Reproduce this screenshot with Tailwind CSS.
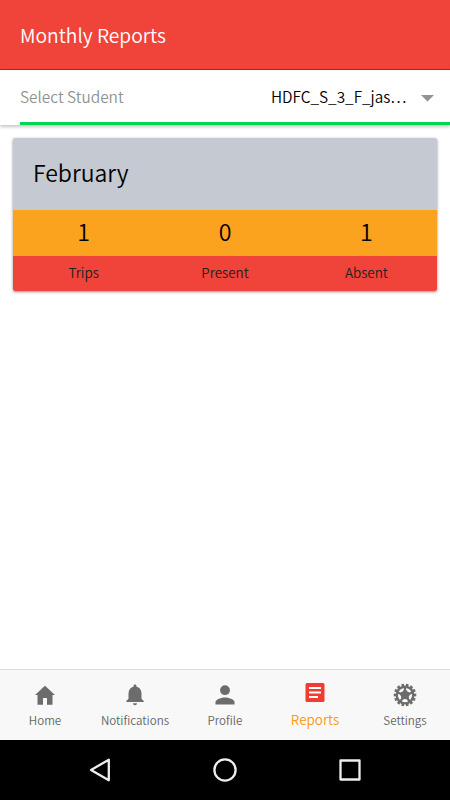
<!DOCTYPE html>
<html lang="en">
<head>
<meta charset="utf-8">
<title>Monthly Reports</title>
<script src="https://cdn.jsdelivr.net/npm/@tailwindcss/browser@4"></script>
</head>
<body class="flex h-[800px] w-[450px] flex-col overflow-hidden bg-white font-['Noto_Sans_CJK_SC',sans-serif] font-[350] text-black">
  <header class="flex h-[70px] shrink-0 items-center border-b border-[#df0c10] bg-[#f04339] pl-5">
    <h1 class="pt-px text-[19.250px] leading-7 font-[350] text-white">Monthly Reports</h1>
  </header>
  <main class="flex-1">
    <div class="flex h-[55px] pl-5 shadow-[0_2px_3px_rgba(0,0,0,0.22)]">
      <div class="flex flex-1 items-center border-b-3 border-[#00d64f] pr-4">
        <label class="mb-px flex-1 text-[15.400px] leading-6 text-[#929292]">Select Student</label>
        <span class="mb-px w-[137px] whitespace-nowrap text-[15.350px] leading-6">HDFC_S_3_F_jas…</span>
        <svg class="ml-[13px] mt-[4px] h-[7px] w-[13px]" viewBox="0 0 13 7"><path d="M0 0h13L6.500 6.500z" fill="#929292"/></svg>
      </div>
    </div>
    <section class="mx-[13px] mt-[13px] overflow-hidden rounded-[2px] shadow-[0_1px_3px_rgba(0,0,0,0.45)]">
      <h2 class="flex h-[72px] items-center bg-[#c5c9d1] pb-[5px] pl-5 text-[23px] leading-8 font-[350]">February</h2>
      <div class="grid h-[46px] grid-cols-3 items-center bg-[#fba31f] pb-[4px] text-center text-[23.200px] leading-8">
        <span>1</span><span>0</span><span>1</span>
      </div>
      <div class="grid h-[35px] grid-cols-3 items-center bg-[#f04339] pb-[3px] text-center text-[13.400px] leading-5 text-[#222]">
        <span>Trips</span><span>Present</span><span>Absent</span>
      </div>
    </section>
  </main>
  <nav class="grid h-[71px] shrink-0 grid-cols-5 border-t border-[#dedede] bg-[#f8f8f8] text-center text-[11.600px] leading-4 text-[#656565]">
    <a class="flex flex-col items-center pt-[13px]">
      <svg class="h-6 w-6" viewBox="0 0 24 24" fill="#6c6c6c"><path d="M12 2.800 22 12h-2.500v9.700H14V15h-4v6.700H4.500V12H2z"/></svg>
      <span class="mt-[5px]">Home</span>
    </a>
    <a class="flex flex-col items-center pt-[13px]">
      <svg class="h-6 w-6" viewBox="0 0 24 24" fill="#6c6c6c"><path d="M12 1.500c.9 0 1.500.7 1.500 1.500v.8c3 .7 5 3.300 5 6.400v5.500l2.200 2.300v1H3.300v-1l2.200-2.300v-5.500c0-3.100 2-5.700 5-6.400V3c0-.8.6-1.500 1.500-1.500zM10 20.200h4c0 1.100-.9 2-2 2s-2-.9-2-2z"/></svg>
      <span class="mt-[5px]">Notifications</span>
    </a>
    <a class="flex flex-col items-center pt-[13px]">
      <svg class="h-6 w-6" viewBox="0 0 24 24" fill="#6c6c6c"><circle cx="12" cy="7.200" r="4.900"/><path d="M2.500 21.500v-2.300c0-3.100 6.300-4.700 9.500-4.700s9.500 1.600 9.500 4.700v2.300z"/></svg>
      <span class="mt-[5px]">Profile</span>
    </a>
    <a class="flex flex-col items-center pt-[10px] text-[13.500px] text-[#f99b10]">
      <svg class="h-6 w-6" viewBox="0 0 24 24"><rect x="2.500" y="3" width="19" height="19" rx="1.500" fill="#f03c32"/><path d="M6 8h12M6 12.500h12M6 17h9" stroke="#fff" stroke-width="2.200"/></svg>
      <span class="mt-[7px]">Reports</span>
    </a>
    <a class="flex flex-col items-center pt-[13px]">
      <svg class="h-6 w-6" viewBox="0 0 24 24" fill="#6c6c6c">
        <circle cx="12" cy="12" r="10" fill="none" stroke="#6c6c6c" stroke-width="2.600" pathLength="56" stroke-dasharray="2.300 1.700" stroke-dashoffset="1.150"/>
        <circle cx="12" cy="12" r="9.600"/>
        <g fill="#f8f8f8">
          <path id="g" d="M8.900 18.500 9.800 16.800q2.200-1.400 4.400 0l.9 1.700q-3.100 1.400-6.200 0z"/>
          <use href="#g" transform="rotate(72 12 12)"/><use href="#g" transform="rotate(144 12 12)"/><use href="#g" transform="rotate(216 12 12)"/><use href="#g" transform="rotate(288 12 12)"/>
        </g>
      </svg>
      <span class="mt-[5px]">Settings</span>
    </a>
  </nav>
  <footer class="flex h-[60px] shrink-0 items-center justify-center gap-[101px] bg-black">
    <svg class="h-6 w-6" viewBox="0 0 24 24" fill="none" stroke="#eee" stroke-width="2.300" stroke-linejoin="round"><path d="M3 12 20.800 1.700v20.600z"/></svg>
    <svg class="h-6 w-6" viewBox="0 0 24 24" fill="none" stroke="#eee" stroke-width="2.300"><circle cx="12" cy="12" r="10.600"/></svg>
    <svg class="h-6 w-6" viewBox="0 0 24 24" fill="none" stroke="#eee" stroke-width="2.300" stroke-linejoin="round"><path d="M2.500 2.500h19v19h-19z"/></svg>
  </footer>
</body>
</html>
